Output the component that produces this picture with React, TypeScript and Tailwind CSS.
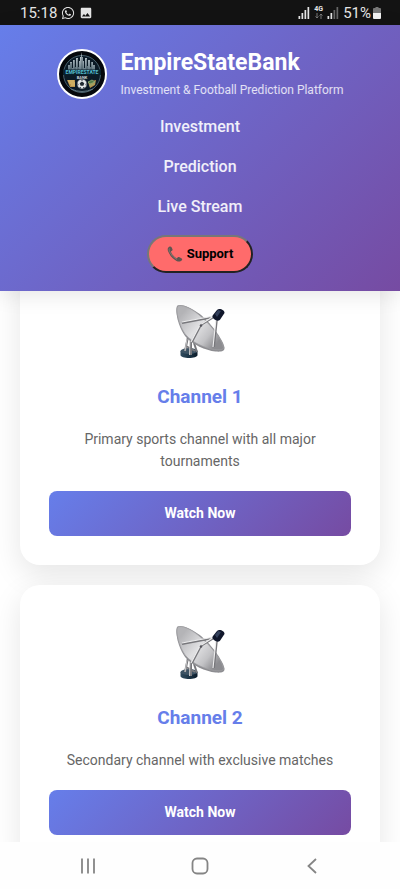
import { FaWhatsapp } from "react-icons/fa";
import { MdImage } from "react-icons/md";

const channels = [
  { id: 1, title: "Channel 1", description: "Primary sports channel with all major tournaments" },
  { id: 2, title: "Channel 2", description: "Secondary channel with exclusive matches" }
];

const links = ["Investment", "Prediction", "Live Stream"];

function SignalIcon({ level }: { level: number }) {
  return (
    <svg viewBox="0 0 12 12" className="h-3 w-3" aria-hidden="true">
      {[0, 1, 2, 3].map((i) => (
        <rect
          key={i}
          x={i * 3 + 0.5}
          y={9 - i * 3}
          width="1.7"
          height={3 + i * 3}
          fill={i < level ? "#e5e5e5" : "#666"}
        />
      ))}
    </svg>
  );
}

function StatusBar() {
  return (
    <div className="flex h-[25px] shrink-0 items-center justify-between bg-[#131313] pr-[19px] pl-5 text-[#e5e5e5]">
      <div className="flex items-center gap-1">
        <span className="text-[15px] leading-6">15:18</span>
        <FaWhatsapp className="h-3.5 w-3.5" />
        <MdImage className="h-3.5 w-3.5" />
      </div>
      <div className="flex items-center gap-1">
        <SignalIcon level={4} />
        <div className="flex flex-col items-center">
          <span className="text-[7px] leading-[7px] font-bold">4G</span>
          <svg viewBox="0 0 8 6" className="h-1.5 w-2" fill="none" stroke="#777" aria-hidden="true">
            <path d="M2 0v5M.5 3.5 2 5l1.500-1.500M6 6V1M4.500 2.500 6 1l1.500 1.500" />
          </svg>
        </div>
        <SignalIcon level={2} />
        <div className="flex items-center gap-0.5">
          <span className="text-[15px] leading-6">51%</span>
          <svg viewBox="0 0 8 12" className="h-3 w-2" aria-hidden="true">
            <path d="M2.500 0h3v1H7q1 0 1 1v4H0V2q0-1 1-1h1.500z" fill="#777" />
            <path d="M0 6h8v5q0 1-1 1H1q-1 0-1-1z" fill="#f2f2f2" />
          </svg>
        </div>
      </div>
    </div>
  );
}

function Logo() {
  return (
    <svg viewBox="0 0 50 50" className="h-[50px] w-[50px] shrink-0" role="img" aria-label="EmpireStateBank logo">
      <defs>
        <linearGradient id="steel" x1="0" y1="0" x2="0" y2="1">
          <stop offset="0" stopColor="#dce3e6" />
          <stop offset="1" stopColor="#536a76" />
        </linearGradient>
      </defs>
      <circle cx="25" cy="25" r="24" fill="#05080c" stroke="#fff" strokeWidth="2" />
      <circle cx="25" cy="25" r="18.500" fill="#0b1a26" stroke="#587380" strokeWidth=".8" />
      <path
        d="M11 23v-7h2v-3h2v6h1v-8h2v7h1V9h2v9h1v-6h1V8h1l.5-5L25 8h1v4h1v7h1V9h2v8h1v-6h2v7h1v-5h2v3h2v7z"
        fill="url(#steel)"
      />
      <path d="M14 14v8M18 11v11M21 10v12M25 7v15M30 10v12M34 13v9" stroke="#172832" strokeWidth=".5" />
      <rect x="6" y="20.500" width="38" height="5.500" fill="#08202c" />
      <text
        x="25"
        y="25"
        textAnchor="middle"
        fill="#55bed0"
        className="font-[Roboto] text-[5px] font-bold"
      >
        EMPIRESTATE
      </text>
      <text x="25" y="29.500" textAnchor="middle" fill="#ccd5da" className="font-[Roboto] text-[4px] font-bold">
        BANK
      </text>
      <path d="M10 31h8v7h-5zM31 33l8-2-1 5-5 3z" fill="#b8924a" />
      <path d="M11 32h6M12 34h6M14 36h4" stroke="#f2d985" strokeWidth=".8" />
      <path d="m31 33 4-2 3 2-5 2zM32 37l5-2" stroke="#8db17a" fill="#557b48" strokeWidth=".8" />
      <circle cx="25" cy="35" r="5" fill="#e4e8e9" stroke="#28323a" strokeWidth=".6" />
      <path
        d="m25 32.500 2.300 1.700-.9 2.600h-2.800l-.9-2.600zM23 30.500h4l-2 1.300zM20.500 33.500l1 2-.6 1.500zM29.500 33.500l-1 2 .6 1.500zM22 38l2 .3-.2 1.300zM28 38l-2 .3.2 1.300z"
        fill="#202a31"
      />
      <path d="M14 40q11 5 22 0" fill="none" stroke="#6f8791" strokeWidth=".8" />
    </svg>
  );
}

function PhoneIcon() {
  return (
    <svg viewBox="0 0 16 16" className="h-4 w-4" aria-hidden="true">
      <path
        d="M2.200.8C.6 1.800.3 3.500 1.200 5.500c1.700 4.200 4.600 7.500 8.300 9.400 2.100 1 4 .9 5.400-.7.5-.6.400-1.200-.2-1.600l-2.600-1.500c-.6-.3-1.100-.2-1.500.3l-.8 1c-2.800-1.500-5-4.300-6-7l1.200-.7c.5-.3.7-.8.5-1.400L4.400 1.100C4 .400 3.100.3 2.200.8z"
        fill="#5f5550"
      />
      <path d="M2.500 2.500q-.8 1 0 3 2 5 7.500 8" fill="none" stroke="#8d7c75" strokeWidth=".8" />
    </svg>
  );
}

function DishIcon() {
  return (
    <svg viewBox="0 0 70 70" className="h-[70px] w-[70px]" aria-hidden="true">
      <defs>
        <linearGradient id="dish" x1=".1" y1=".2" x2=".9" y2=".8">
          <stop offset="0" stopColor="#b4b4b7" />
          <stop offset=".45" stopColor="#e0e0e2" />
          <stop offset=".75" stopColor="#c2c2c5" />
          <stop offset="1" stopColor="#8c8c90" />
        </linearGradient>
        <linearGradient id="base" x1="0" y1="0" x2="1" y2="0">
          <stop offset="0" stopColor="#314b5e" />
          <stop offset=".5" stopColor="#1c3547" />
          <stop offset="1" stopColor="#0c1b29" />
        </linearGradient>
      </defs>
      <path d="M15.500 55v4c0 4 17 4 17 0v-4z" fill="url(#base)" />
      <ellipse cx="24" cy="55" rx="8.500" ry="3" fill="#3d5364" />
      <path d="m23 41-3 14M26 43v16M29 47l3 9M21 50l9 5" stroke="#77777b" strokeWidth="2" />
      <path d="m25 43-.5 16M22 43l-2 12" stroke="#c8c8ca" strokeWidth="1" />
      <path
        d="M12.500 9.500C16 7.500 25 11 34 17.500c11 8 24 26 25.500 34 .5 4-4 4.500-9 4-10-1-23-7-30-15C13.500 32 9 13 12.500 9.500z"
        fill="#8d8d91"
      />
      <path
        d="M13 10c3.500-1.500 12 1.500 20.500 8.500C44.500 27 57 43 58.500 51.500c0 2.500-5 2.500-9 2C39 52 27 46 21 39 14.500 31 10 14 13 10z"
        fill="url(#dish)"
        stroke="#a3a3a6"
        strokeWidth=".6"
      />
      <path d="m17 27 32-6M27 46l9-17 13-8M49 51l3-28" stroke="#77777b" strokeWidth="1.800" fill="none" />
      <path d="m17 26 32-6M26 46l9-17 14-9M48 51l3-28" stroke="#ededee" strokeWidth="1.100" fill="none" />
      <circle cx="36" cy="29.500" r="1.300" fill="#55555b" />
      <path d="m48 19 4-5c2-2.500 8 0 7.500 3l-4 6c-1 2-3 2-5 1-2.500-1.500-4-3-2.500-5z" fill="#10172b" />
      <path d="m50 18 3-4 3 1-4 6z" fill="#33405b" />
    </svg>
  );
}

function ChannelCard({ title, description }: { title: string; description: string }) {
  return (
    <article className="flex flex-col rounded-[20px] bg-white p-[29px] text-center shadow-[0_10px_30px_rgba(0,0,0,0.1)]">
      <div className="flex h-[76px] items-center justify-center">
        <DishIcon />
      </div>
      <h2 className="mt-3.5 text-[19px] leading-7 font-bold text-[#667eea]">{title}</h2>
      <p className="mt-[17px] text-[14px] leading-[22px] text-[#666]">{description}</p>
      <button
        type="button"
        className="mt-[19px] h-[45px] rounded-lg bg-[linear-gradient(135deg,#667eea,#764ba2)] text-[14px] font-bold text-white"
      >
        Watch Now
      </button>
    </article>
  );
}

export default function App() {
  return (
    <div className="flex h-dvh flex-col bg-white font-[Roboto,sans-serif]">
      <StatusBar />
      <header className="relative z-10 flex shrink-0 flex-col items-center bg-[linear-gradient(135deg,#667eea,#764ba2)] pt-[22px] pb-[18px] text-white shadow-[0_4px_20px_rgba(0,0,0,0.1)]">
        <div className="flex items-center gap-3.5">
          <Logo />
          <div>
            <h1 className="text-[23px] leading-8 font-bold">EmpireStateBank</h1>
            <p className="text-[12px] leading-[22px] text-white/80">Investment &amp; Football Prediction Platform</p>
          </div>
        </div>
        <nav className="mt-3.5 flex flex-col items-center gap-4">
          {links.map((link) => (
            <a key={link} href="#" className="text-[16px] leading-6 font-medium text-white/90">
              {link}
            </a>
          ))}
          <button
            type="button"
            className="flex h-[38px] items-center gap-1 rounded-full border-2 border-t-[#777] border-r-[#222] border-b-[#222] border-l-[#777] bg-[#ff6b6b] px-[18px] text-[13px] font-bold text-black"
          >
            <PhoneIcon />
            Support
          </button>
        </nav>
      </header>
      <main className="min-h-0 flex-1 overflow-hidden">
        {/* list is scrolled slightly under the header */}
        <div className="-mt-[27px] flex flex-col gap-5 px-5">
          {channels.map((c) => (
            <ChannelCard key={c.id} title={c.title} description={c.description} />
          ))}
        </div>
      </main>
      <div className="relative z-10 flex h-[47px] shrink-0 items-center justify-around bg-[#fefefe] px-8 text-[#858585]">
        <button type="button" aria-label="Recent apps">
          <svg viewBox="0 0 16 16" className="h-4 w-4" stroke="currentColor" strokeWidth="1.800">
            <path d="M2 .5v15M8 .5v15M14 .5v15" />
          </svg>
        </button>
        <button type="button" aria-label="Home">
          <svg viewBox="0 0 18 18" className="h-[18px] w-[18px]" fill="none" stroke="currentColor" strokeWidth="1.800">
            <rect x="1.500" y="1.500" width="15" height="15" rx="4.500" />
          </svg>
        </button>
        <button type="button" aria-label="Back">
          <svg viewBox="0 0 16 16" className="h-4 w-4" fill="none" stroke="currentColor" strokeWidth="1.800">
            <path d="M12 1 4.500 8l7.500 7" />
          </svg>
        </button>
      </div>
    </div>
  );
}
